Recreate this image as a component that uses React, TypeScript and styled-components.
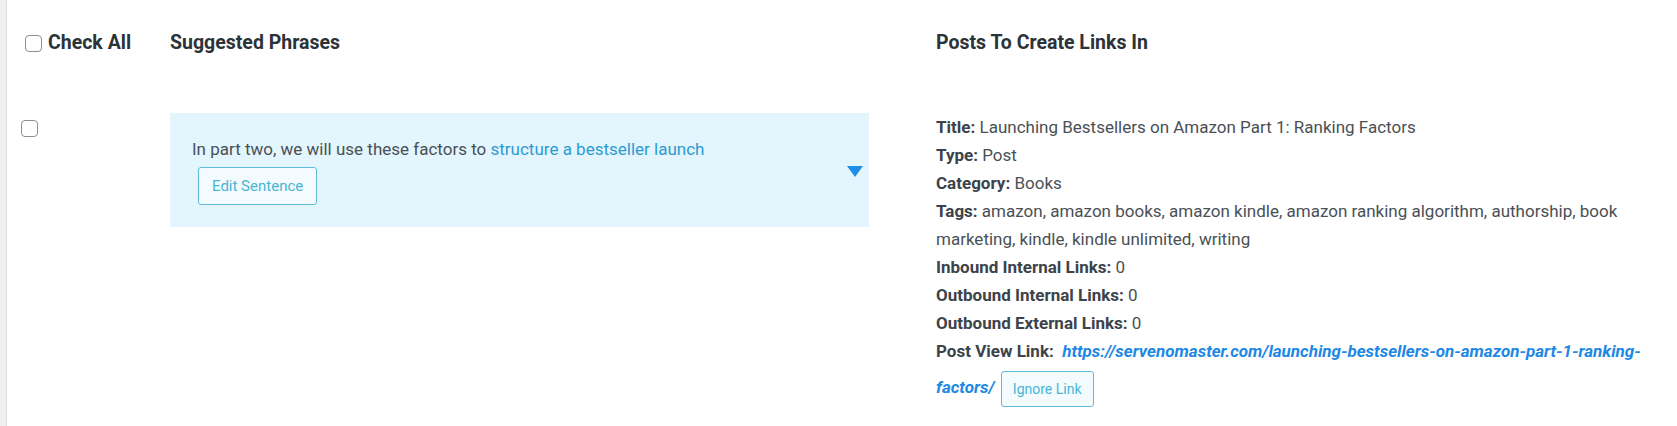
import styled, { createGlobalStyle } from "styled-components";

const GlobalStyle = createGlobalStyle`
  html, body {
    margin: 0;
    padding: 0;
    background: #ffffff;
  }
  body {
    font-family: Roboto, "Liberation Sans", sans-serif;
    color: #3c434a;
  }
`;

const post = {
  title: "Launching Bestsellers on Amazon Part 1: Ranking Factors",
  type: "Post",
  category: "Books",
  tags: "amazon, amazon books, amazon kindle, amazon ranking algorithm, authorship, book marketing, kindle, kindle unlimited, writing",
  inbound: 0,
  outboundInternal: 0,
  outboundExternal: 0,
  url: "https://servenomaster.com/launching-bestsellers-on-amazon-part-1-ranking-factors/",
};

export default function App() {
  return (
    <>
      <GlobalStyle />
      <Page>
        <Table>
          <HeadCell>
            <CheckLabel>
              <Check type="checkbox" />
              Check All
            </CheckLabel>
          </HeadCell>
          <HeadCell>Suggested Phrases</HeadCell>
          <HeadCell>Posts To Create Links In</HeadCell>

          <BodyCell>
            <RowCheck type="checkbox" />
          </BodyCell>
          <BodyCell>
            <Phrase>
              <PhraseBody>
                <Sentence>
                  In part two, we will use these factors to{" "}
                  <PhraseLink href="#">structure a bestseller launch</PhraseLink>
                </Sentence>
                <OutlineButton>Edit Sentence</OutlineButton>
              </PhraseBody>
              <Caret />
            </Phrase>
          </BodyCell>
          <BodyCell>
            <Info>
              <Line>
                <b>Title:</b> {post.title}
              </Line>
              <Line>
                <b>Type:</b> {post.type}
              </Line>
              <Line>
                <b>Category:</b> {post.category}
              </Line>
              <Line>
                <b>Tags:</b> {post.tags}
              </Line>
              <Line>
                <b>Inbound Internal Links:</b> {post.inbound}
              </Line>
              <Line>
                <b>Outbound Internal Links:</b> {post.outboundInternal}
              </Line>
              <Line>
                <b>Outbound External Links:</b> {post.outboundExternal}
              </Line>
              <Line>
                <b>Post View Link:</b>&nbsp;&nbsp;
                <PostUrl href="#">{post.url}</PostUrl>{" "}
                <OutlineButton $small>Ignore Link</OutlineButton>
              </Line>
            </Info>
          </BodyCell>
        </Table>
      </Page>
    </>
  );
}

const Page = styled.div`
  min-height: 426px;
  border-left: 6px solid #f0f0f1;
  box-shadow: inset 1px 0 0 #dcdcde;
  box-sizing: border-box;
  padding-left: 1px;
`;

const Table = styled.div`
  display: grid;
  grid-template-columns: 145px 766px 1fr;
`;

const HeadCell = styled.div`
  padding: 31px 8px 0 18px;
  height: 113px;
  box-sizing: border-box;
  font-size: 19.5px;
  font-weight: 700;
  color: #2c3338;
  line-height: 24px;
`;

const BodyCell = styled.div`
  padding: 0 8px 0 18px;
  font-size: 17px;
`;

const CheckLabel = styled.label`
  display: flex;
  align-items: center;
  gap: 6px;
`;

const Check = styled.input`
  appearance: none;
  margin: 0;
  width: 17px;
  height: 17px;
  border: 1px solid #8c8f94;
  border-radius: 4px;
  background: #fff;
  box-sizing: border-box;
  flex: none;
`;

const RowCheck = styled(Check)`
  margin: 7px 0 0 -4px;
`;

const Phrase = styled.div`
  width: 699px;
  height: 114px;
  background: #e3f5fd;
  box-sizing: border-box;
  padding: 22px 6px 0 22px;
  display: flex;
  justify-content: space-between;
  align-items: flex-start;
`;

const PhraseBody = styled.div`
  display: flex;
  flex-direction: column;
  align-items: flex-start;
  gap: 4px;
`;

const Sentence = styled.div`
  line-height: 28px;
  color: #4a5055;
`;

const PhraseLink = styled.a`
  color: #2d9bd2;
  text-decoration: none;
`;

const Caret = styled.span`
  margin-top: 31px;
  width: 0;
  height: 0;
  border-left: 8px solid transparent;
  border-right: 8px solid transparent;
  border-top: 11px solid #1e8fe6;
`;

const OutlineButton = styled.button<{ $small?: boolean }>`
  font-family: inherit;
  font-size: ${(p) => (p.$small ? "14px" : "15px")};
  color: #48b6d3;
  background: #f4fbfe;
  border: 1px solid #5fbcd6;
  border-radius: 3px;
  height: ${(p) => (p.$small ? "36px" : "38px")};
  padding: 0 ${(p) => (p.$small ? "11px" : "13px")};
  margin: ${(p) => (p.$small ? "6px 0 6px 2px" : "0 0 0 6px")};
  vertical-align: middle;
  cursor: pointer;
`;

const Info = styled.div`
  display: flex;
  flex-direction: column;
`;

const Line = styled.div`
  line-height: 28px;
  color: #4a5055;
  b {
    font-weight: 700;
    color: #3c434a;
  }
`;

const PostUrl = styled.a`
  color: #1e88e5;
  font-weight: 700;
  font-style: italic;
  text-decoration: none;
`;
